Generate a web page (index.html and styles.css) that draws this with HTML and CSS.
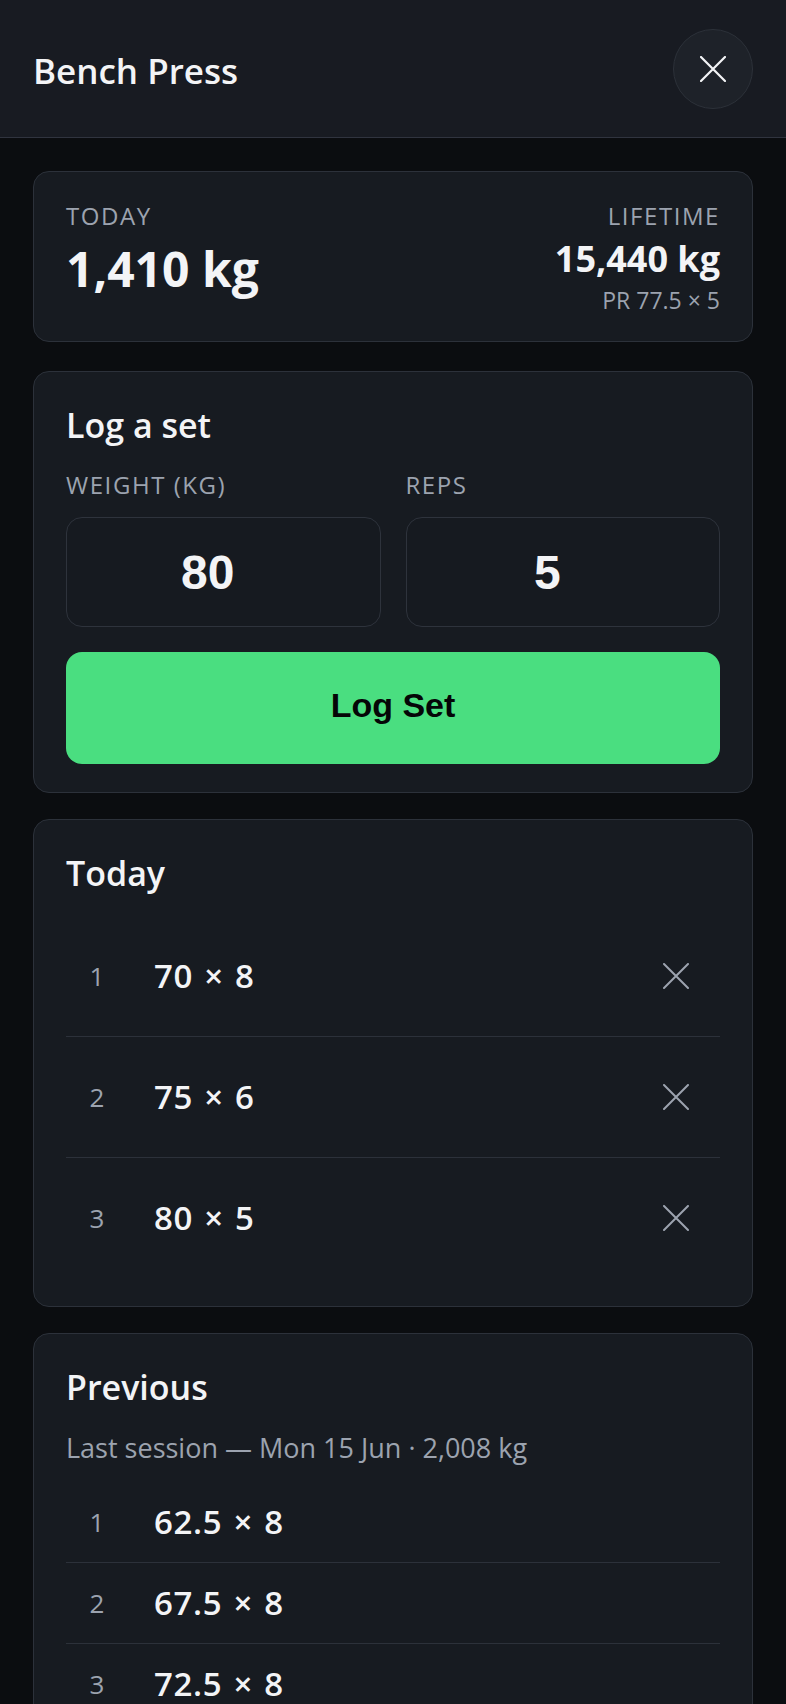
FILE: index.html
```html
<!DOCTYPE html>
<html lang="en">
<head>
<meta charset="utf-8">
<title>Bench Press</title>
<link rel="stylesheet" href="styles.css">
</head>
<body>
<header class="topbar">
  <h1 class="topbar-title">Bench Press</h1>
  <button class="close-btn" aria-label="Close">
    <svg width="26" height="26" viewBox="0 0 26 26"><path d="M1 1 L25 25 M25 1 L1 25" stroke="#f3f4f6" stroke-width="2.2" stroke-linecap="round" fill="none"/></svg>
  </button>
</header>
<main class="content">
  <section class="card stats">
    <div class="stat-left">
      <div class="label">Today</div>
      <div class="big-value">1,410 kg</div>
    </div>
    <div class="stat-right">
      <div class="label">Lifetime</div>
      <div class="mid-value">15,440 kg</div>
      <div class="pr">PR 77.5 × 5</div>
    </div>
  </section>

  <section class="card">
    <h2 class="card-title">Log a set</h2>
    <div class="fields">
      <label class="field">
        <span class="label">Weight (kg)</span>
        <input class="num-input" type="number" value="80">
      </label>
      <label class="field">
        <span class="label">Reps</span>
        <input class="num-input" type="number" value="5">
      </label>
    </div>
    <button class="log-btn">Log Set</button>
  </section>

  <section class="card">
    <h2 class="card-title">Today</h2>
    <ul class="set-list">
      <li class="set-row">
        <span class="set-num">1</span>
        <span class="set-val">70 × 8</span>
        <button class="del-btn" aria-label="Delete set"><svg width="26" height="26" viewBox="0 0 26 26"><path d="M1 1 L25 25 M25 1 L1 25" stroke="#9ca3af" stroke-width="2" stroke-linecap="round" fill="none"/></svg></button>
      </li>
      <li class="set-row">
        <span class="set-num">2</span>
        <span class="set-val">75 × 6</span>
        <button class="del-btn" aria-label="Delete set"><svg width="26" height="26" viewBox="0 0 26 26"><path d="M1 1 L25 25 M25 1 L1 25" stroke="#9ca3af" stroke-width="2" stroke-linecap="round" fill="none"/></svg></button>
      </li>
      <li class="set-row">
        <span class="set-num">3</span>
        <span class="set-val">80 × 5</span>
        <button class="del-btn" aria-label="Delete set"><svg width="26" height="26" viewBox="0 0 26 26"><path d="M1 1 L25 25 M25 1 L1 25" stroke="#9ca3af" stroke-width="2" stroke-linecap="round" fill="none"/></svg></button>
      </li>
    </ul>
  </section>

  <section class="card">
    <h2 class="card-title">Previous</h2>
    <p class="subtitle">Last session — Mon 15 Jun · 2,008 kg</p>
    <ul class="set-list tight">
      <li class="set-row">
        <span class="set-num">1</span>
        <span class="set-val">62.5 × 8</span>
      </li>
      <li class="set-row">
        <span class="set-num">2</span>
        <span class="set-val">67.5 × 8</span>
      </li>
      <li class="set-row">
        <span class="set-num">3</span>
        <span class="set-val">72.5 × 8</span>
      </li>
      <li class="set-row">
        <span class="set-num">4</span>
        <span class="set-val">77.5 × 5</span>
      </li>
    </ul>
  </section>
</main>
</body>
</html>
```

FILE: styles.css
```css
* { box-sizing: border-box; }

html, body {
  margin: 0;
  padding: 0;
  background: #0b0d10;
  color: #f3f4f6;
  font-family: "Open Sans", "Noto Sans", sans-serif;
}

.topbar {
  height: 138px;
  display: flex;
  align-items: center;
  justify-content: space-between;
  padding: 4px 33px 0 33px;
  background: #181b22;
  border-bottom: 1px solid #30343f;
}

.topbar-title {
  margin: 0;
  font-size: 35px;
  font-weight: 600;
  line-height: 44px;
  color: #f3f4f6;
}

.close-btn {
  width: 80px;
  height: 80px;
  border-radius: 50%;
  background: #1e2229;
  border: 1px solid #2c3139;
  display: flex;
  align-items: center;
  justify-content: center;
  padding: 0;
  margin-top: -3px;
}

.content {
  display: flex;
  flex-direction: column;
  gap: 26px;
  padding: 33px 33px 40px 33px;
}

.card {
  background: #171b21;
  border: 1px solid #2c313a;
  border-radius: 16px;
  padding: 28px 32px;
}

.stats {
  display: flex;
  justify-content: space-between;
  align-items: flex-start;
  padding-bottom: 26px;
  margin-bottom: 3px;
}

.label {
  display: block;
  font-size: 24px;
  line-height: 32px;
  letter-spacing: 0.065em;
  text-transform: uppercase;
  color: #9ca3af;
}

.big-value {
  margin-top: 9px;
  font-size: 48px;
  line-height: 56px;
  font-weight: 700;
  color: #f3f4f6;
}

.stat-right {
  text-align: right;
}

.mid-value {
  margin-top: 5px;
  font-size: 36px;
  line-height: 44px;
  font-weight: 700;
}

.pr {
  margin-top: 4px;
  font-size: 23px;
  line-height: 30px;
  color: #9ca3af;
}

.card-title {
  margin: 0;
  font-size: 34px;
  line-height: 50px;
  font-weight: 600;
  color: #f3f4f6;
}

.fields {
  display: grid;
  grid-template-columns: 1fr 1fr;
  gap: 25px;
  margin-top: 19px;
}

.field {
  display: flex;
  flex-direction: column;
  gap: 16px;
}

.num-input {
  width: 100%;
  height: 110px;
  padding: 0 18px 0 2px;
  background: #161a20;
  border: 1px solid #2e333c;
  border-radius: 16px;
  color: #f3f4f6;
  font-family: "Liberation Sans", Arial, sans-serif;
  font-weight: 700;
  font-size: 48px;
  text-align: center;
  outline: none;
}

.log-btn {
  display: block;
  width: 100%;
  height: 112px;
  margin-top: 25px;
  padding: 0 0 5px 0;
  border: none;
  border-radius: 16px;
  background: #4ade80;
  color: #050607;
  font-family: "Liberation Sans", Arial, sans-serif;
  font-weight: 700;
  font-size: 34px;
}

.set-list {
  list-style: none;
  margin: 18px 0 0 0;
  padding: 0;
}

.set-list.tight {
  margin-top: 14px;
}

.set-row {
  display: flex;
  align-items: center;
  gap: 26px;
  padding: 16px 0;
  border-bottom: 1px solid #2c313a;
}

.set-row:last-child {
  border-bottom: none;
}

.set-num {
  width: 62px;
  text-align: center;
  font-size: 26px;
  line-height: 36px;
  color: #9ca3af;
}

.set-val {
  flex: 1;
  font-size: 33px;
  line-height: 48px;
  font-weight: 600;
  letter-spacing: 0.02em;
  word-spacing: 2px;
  color: #f3f4f6;
}

.del-btn {
  width: 88px;
  height: 88px;
  border: none;
  background: transparent;
  display: flex;
  align-items: center;
  justify-content: center;
  padding: 0;
}

.subtitle {
  margin: 16px 0 0 0;
  font-size: 27px;
  line-height: 40px;
  color: #9ca3af;
}
```
